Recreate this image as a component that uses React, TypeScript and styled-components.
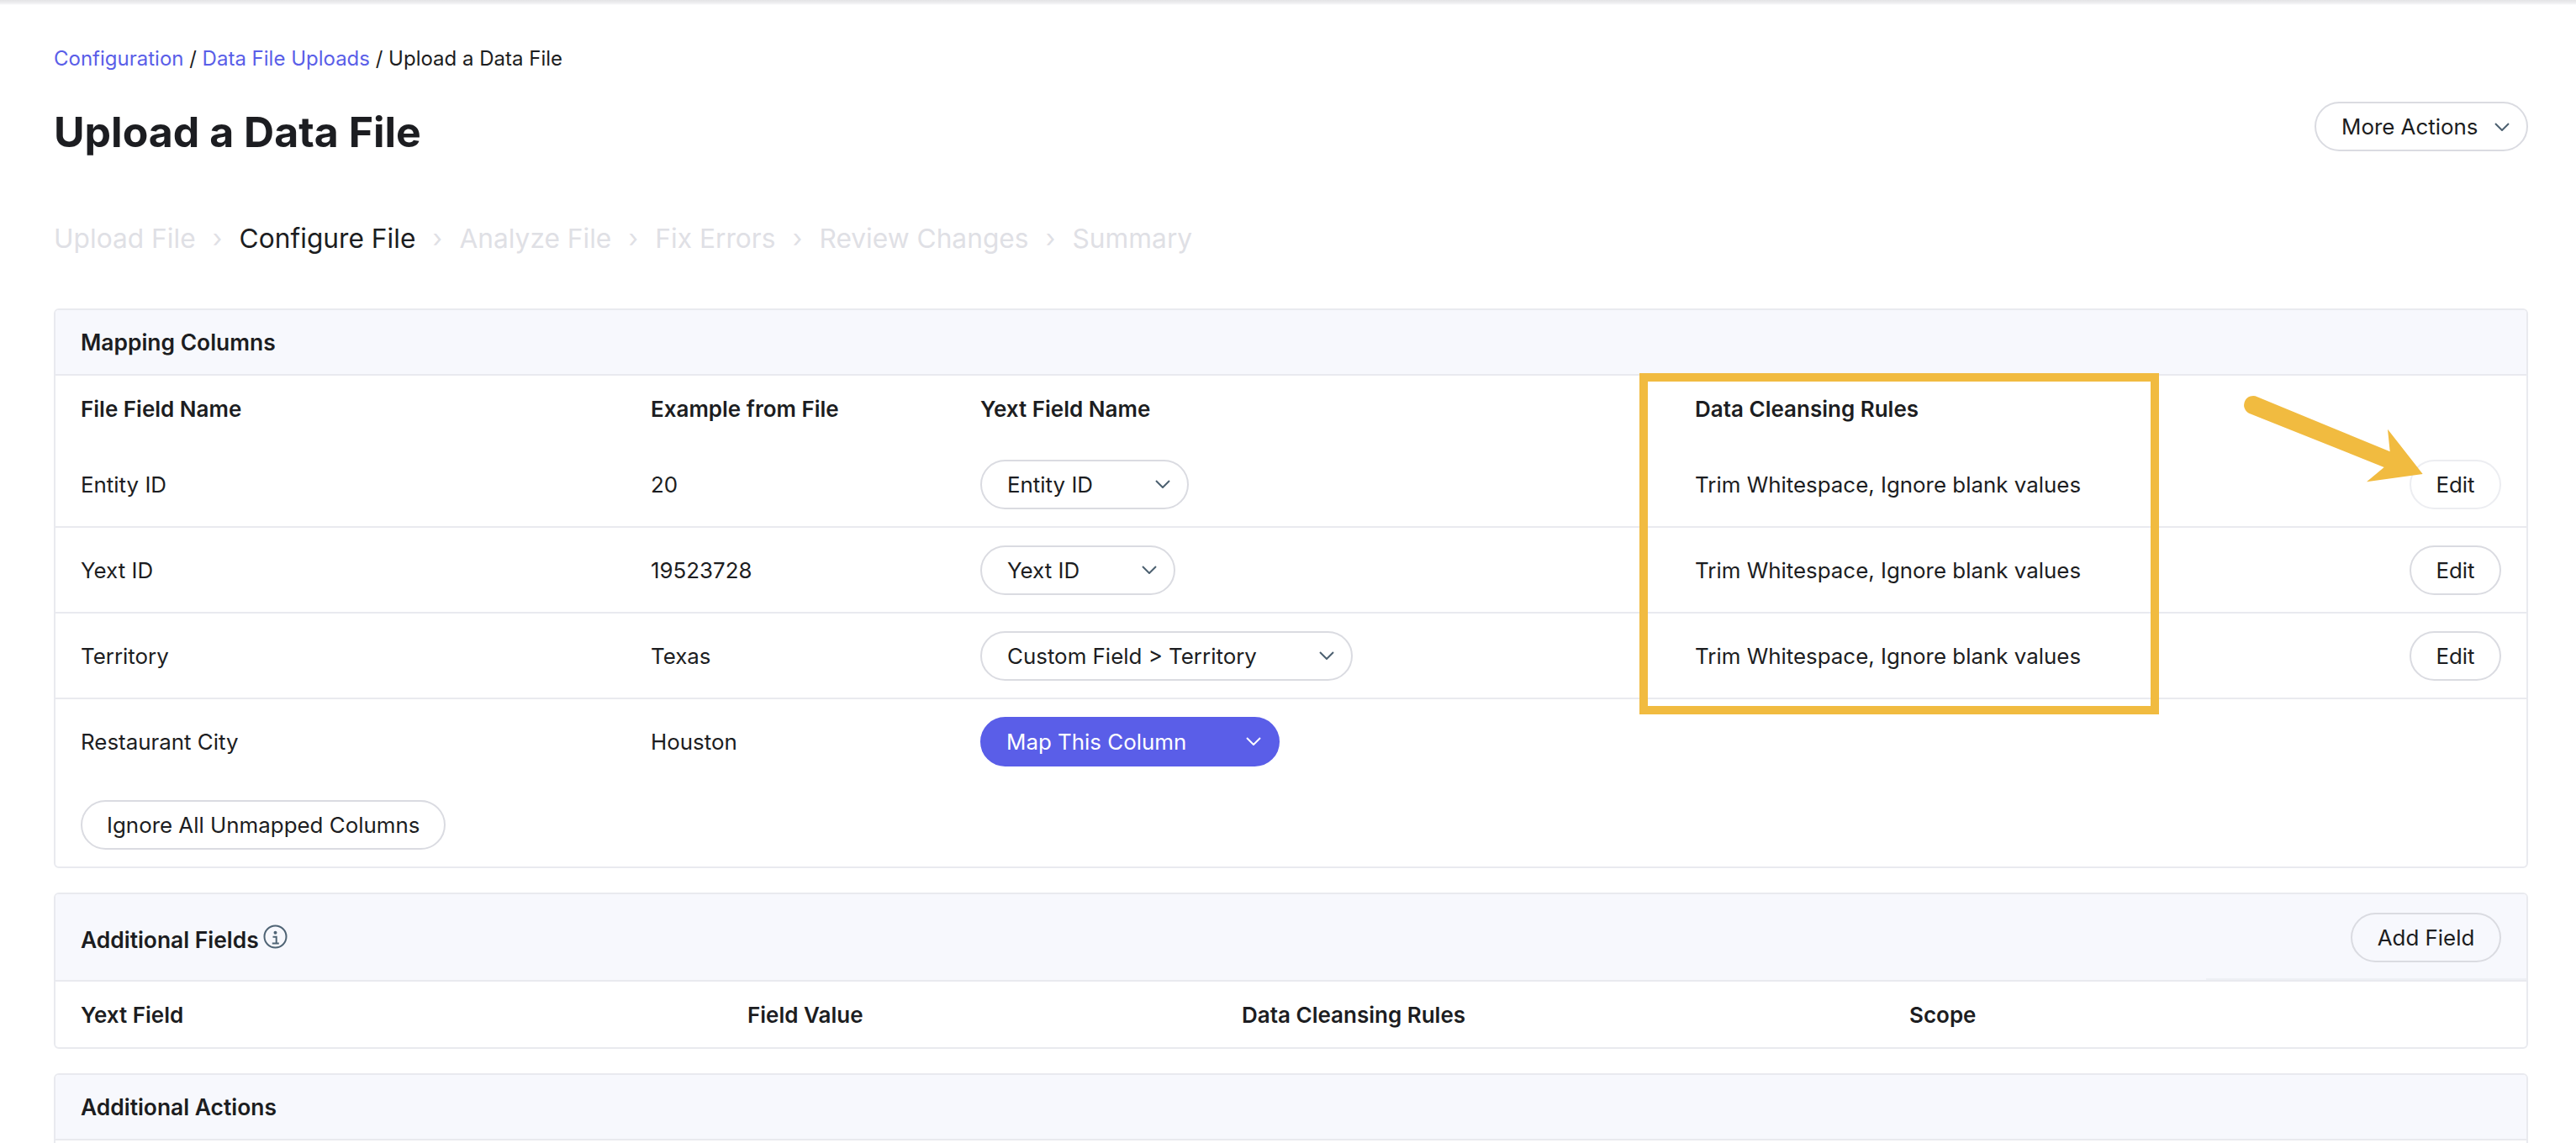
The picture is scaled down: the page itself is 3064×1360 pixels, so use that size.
import React from 'react';
import styled, { createGlobalStyle } from 'styled-components';

const GlobalStyle = createGlobalStyle`
  html, body {
    margin: 0;
    padding: 0;
    background: #fff;
    overflow: hidden;
  }
  body {
    font-family: Inter, "Liberation Sans", sans-serif;
    color: #1c1d21;
  }
  * {
    box-sizing: border-box;
  }
`;

const Page = styled.div`
  position: relative;
  width: 3064px;
  height: 1360px;
  overflow: hidden;
  padding: 6px 57px 0 64px;
  background: linear-gradient(#e4e4e6, #f0f0f2 4px, #fff 6px);
`;

const Breadcrumbs = styled.div`
  padding-top: 47px;
  height: 115px;
  font-size: 24px;
  line-height: 34px;
`;

const Crumb = styled.a`
  color: #5a5ee8;
`;

const HeaderRow = styled.div`
  display: flex;
  justify-content: space-between;
  align-items: flex-start;
  height: 138px;
`;

const Title = styled.h1`
  margin: 0;
  padding-top: 3px;
  font-size: 50px;
  line-height: 66px;
  font-weight: 700;
`;

const Steps = styled.div`
  display: flex;
  align-items: center;
  height: 48px;
  font-size: 31.7px;
  margin-bottom: 60px;
`;

const Step = styled.span<{ $active?: boolean }>`
  color: ${(p) => (p.$active ? '#1c1d21' : '#dfe0e5')};
`;

const StepArrow = styled.span`
  color: #dfe0e5;
  font-size: 30px;
  width: 52px;
  text-align: center;
`;

const Panel = styled.section`
  border: 2px solid #e9eaef;
  border-radius: 6px;
  margin-bottom: 29px;
  background: #fff;
`;

const PanelHeader = styled.div<{ $height: number }>`
  position: relative;
  display: flex;
  justify-content: space-between;
  align-items: center;
  height: ${(p) => p.$height}px;
  padding: 0 30px;
  background: #f7f8fd;
  border-bottom: 2px solid #e9eaef;
  border-radius: 4px 4px 0 0;
`;

const PanelTitle = styled.h2<{ $drop?: number }>`
  display: flex;
  align-items: center;
  margin: ${(p) => p.$drop ?? 0}px 0 0;
  font-size: 26.4px;
  line-height: 34px;
  font-weight: 600;
`;

const Grid = styled.div<{ $columns: string; $height: number; $line?: boolean }>`
  display: grid;
  grid-template-columns: ${(p) => p.$columns};
  align-items: center;
  height: ${(p) => p.$height}px;
  padding: 0 30px;
  font-size: 25.9px;
  border-bottom: ${(p) => (p.$line ? '2px solid #e9eaef' : 'none')};
`;

const HeadCell = styled.div`
  font-size: 26px;
  font-weight: 600;
`;

const Pill = styled.button<{ $faded?: boolean; $width?: number }>`
  display: inline-flex;
  align-items: center;
  justify-content: center;
  height: 59px;
  width: ${(p) => (p.$width ? `${p.$width}px` : 'auto')};
  padding: 0 29px;
  font-family: inherit;
  font-size: 25.9px;
  color: #1c1d21;
  background: transparent;
  border: 2px solid ${(p) => (p.$faded ? '#ecedf1' : '#dadbe1')};
  border-radius: 30px;
`;

const Select = styled(Pill)<{ $primary?: boolean }>`
  justify-content: space-between;
  padding: 0 20px 0 ${(p) => (p.$primary ? 29 : 30)}px;
  color: ${(p) => (p.$primary ? '#fff' : '#1c1d21')};
  background: ${(p) => (p.$primary ? '#5a5ee8' : 'transparent')};
  border-color: ${(p) => (p.$primary ? '#5a5ee8' : '#dadbe1')};
`;

const ActionCell = styled.div`
  display: flex;
  justify-content: flex-end;
`;

const FooterRow = styled.div`
  height: 99px;
  padding: 20px 30px 0;
`;

const PanelBody = styled.div`
  height: 120px;
`;

const Highlight = styled.div`
  position: absolute;
  left: 1950px;
  top: 444px;
  width: 618px;
  height: 406px;
  border: 10px solid #f1bb40;
  pointer-events: none;
`;

const ArrowMark = styled.svg`
  position: absolute;
  left: 2660px;
  top: 460px;
  width: 240px;
  height: 130px;
  pointer-events: none;
`;

const Seam = styled.div`
  position: absolute;
  right: 0;
  bottom: 0;
  width: 381px;
  height: 2px;
  background: #eef0f5;
`;

const InfoIcon = styled.svg`
  width: 29px;
  height: 29px;
  margin: -8px 0 0 5px;
`;

const Chevron = ({ color = '#4c6070' }: { color?: string }) => (
  <svg width="18" height="10" viewBox="0 0 18 10" fill="none">
    <path d="M1 1l8 8 8-8" stroke={color} strokeWidth="2" />
  </svg>
);

const mapColumns = '678px 392px 850px 1fr 120px';
const fieldColumns = '793px 588px 794px 1fr';

const rows = [
  { name: 'Entity ID', example: '20', field: 'Entity ID', width: 248, faded: true },
  { name: 'Yext ID', example: '19523728', field: 'Yext ID', width: 232 },
  { name: 'Territory', example: 'Texas', field: 'Custom Field > Territory', width: 443 },
];

const laterSteps = ['Analyze File', 'Fix Errors', 'Review Changes', 'Summary'];

const App: React.FC = () => {
  return (
    <Page>
      <GlobalStyle />
      <Breadcrumbs>
        <Crumb>Configuration</Crumb> / <Crumb>Data File Uploads</Crumb> / Upload a Data File
      </Breadcrumbs>
      <HeaderRow>
        <Title>Upload a Data File</Title>
        <Select $width={254}>
          More Actions <Chevron />
        </Select>
      </HeaderRow>
      <Steps>
        <Step>Upload File</Step>
        <StepArrow>›</StepArrow>
        <Step $active>Configure File</Step>
        {laterSteps.map((step) => (
          <React.Fragment key={step}>
            <StepArrow>›</StepArrow>
            <Step>{step}</Step>
          </React.Fragment>
        ))}
      </Steps>

      <Panel>
        <PanelHeader $height={78}>
          <PanelTitle>Mapping Columns</PanelTitle>
        </PanelHeader>
        <Grid $columns={mapColumns} $height={79}>
          <HeadCell>File Field Name</HeadCell>
          <HeadCell>Example from File</HeadCell>
          <HeadCell>Yext Field Name</HeadCell>
          <HeadCell>Data Cleansing Rules</HeadCell>
        </Grid>
        {rows.map((row) => (
          <Grid key={row.name} $columns={mapColumns} $height={102} $line>
            <div>{row.name}</div>
            <div>{row.example}</div>
            <div>
              <Select $width={row.width}>
                {row.field} <Chevron />
              </Select>
            </div>
            <div>Trim Whitespace, Ignore blank values</div>
            <ActionCell>
              <Pill $faded={row.faded} $width={109}>
                Edit
              </Pill>
            </ActionCell>
          </Grid>
        ))}
        <Grid $columns={mapColumns} $height={100}>
          <div>Restaurant City</div>
          <div>Houston</div>
          <div>
            <Select $primary $width={356}>
              Map This Column <Chevron color="#fff" />
            </Select>
          </div>
        </Grid>
        <FooterRow>
          <Pill>Ignore All Unmapped Columns</Pill>
        </FooterRow>
      </Panel>

      <Panel>
        <PanelHeader $height={104}>
          <PanelTitle $drop={6}>
            Additional Fields
            <InfoIcon viewBox="0 0 29 29" fill="none">
              <circle cx="14.5" cy="14.5" r="13" stroke="#4f6475" strokeWidth="2" />
              <circle cx="14.5" cy="9.8" r="2" fill="#4f6475" />
              <path d="M11.5 14.8h4.2v7.4M10.8 22.6h8" stroke="#4f6475" strokeWidth="2" />
            </InfoIcon>
          </PanelTitle>
          <Pill $width={179}>Add Field</Pill>
          <Seam />
        </PanelHeader>
        <Grid $columns={fieldColumns} $height={78}>
          <HeadCell>Yext Field</HeadCell>
          <HeadCell>Field Value</HeadCell>
          <HeadCell>Data Cleansing Rules</HeadCell>
          <HeadCell>Scope</HeadCell>
        </Grid>
      </Panel>

      <Panel>
        <PanelHeader $height={78}>
          <PanelTitle>Additional Actions</PanelTitle>
        </PanelHeader>
        <PanelBody />
      </Panel>

      <Highlight />
      <ArrowMark viewBox="0 0 240 130">
        <path
          d="M25 12.3 L182.7 77.3 L180 50.7 L221.7 104 L155 113.3 L175.7 96 L15 31.7 A10.5 10.5 0 0 1 25 12.3 Z"
          fill="#f1bb40"
        />
      </ArrowMark>
    </Page>
  );
};

export default App;
